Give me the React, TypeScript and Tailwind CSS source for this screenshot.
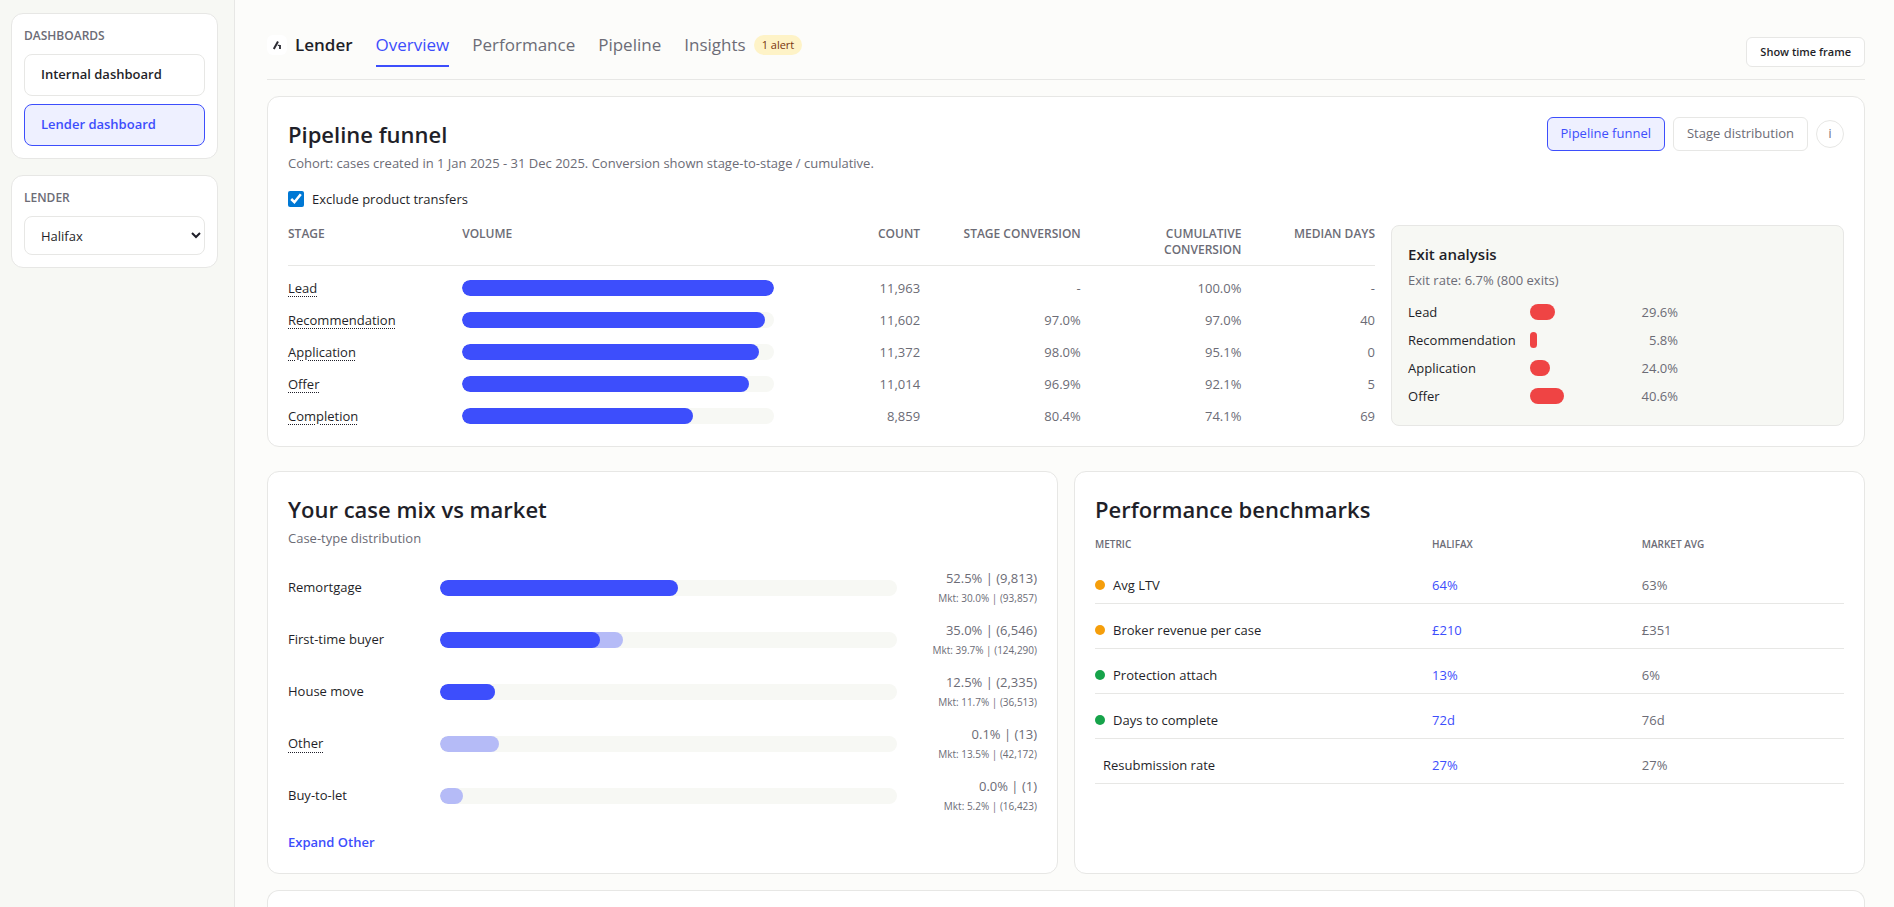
import React from "react";

type Stage = {
  name: string;
  fill: number;
  count: string;
  stageConversion: string;
  cumulative: string;
  medianDays: string;
};

const stages: Stage[] = [
  { name: "Lead", fill: 100, count: "11,963", stageConversion: "-", cumulative: "100.0%", medianDays: "-" },
  { name: "Recommendation", fill: 97, count: "11,602", stageConversion: "97.0%", cumulative: "97.0%", medianDays: "40" },
  { name: "Application", fill: 95, count: "11,372", stageConversion: "98.0%", cumulative: "95.1%", medianDays: "0" },
  { name: "Offer", fill: 92, count: "11,014", stageConversion: "96.9%", cumulative: "92.1%", medianDays: "5" },
  { name: "Completion", fill: 74, count: "8,859", stageConversion: "80.4%", cumulative: "74.1%", medianDays: "69" },
];

const exits = [
  { name: "Lead", fill: 30, share: "29.6%" },
  { name: "Recommendation", fill: 8, share: "5.8%" },
  { name: "Application", fill: 24, share: "24.0%" },
  { name: "Offer", fill: 41, share: "40.6%" },
];

const caseMix = [
  { name: "Remortgage", own: 52, market: 30, value: "52.5% | (9,813)", marketValue: "Mkt: 30.0% | (93,857)" },
  { name: "First-time buyer", own: 35, market: 40, value: "35.0% | (6,546)", marketValue: "Mkt: 39.7% | (124,290)" },
  { name: "House move", own: 12, market: 12, value: "12.5% | (2,335)", marketValue: "Mkt: 11.7% | (36,513)" },
  { name: "Other", own: 0, market: 13, value: "0.1% | (13)", marketValue: "Mkt: 13.5% | (42,172)", expandable: true },
  { name: "Buy-to-let", own: 0, market: 5, value: "0.0% | (1)", marketValue: "Mkt: 5.2% | (16,423)" },
];

const benchmarks = [
  { name: "Avg LTV", dot: "bg-[#f59e0b]", own: "64%", market: "63%" },
  { name: "Broker revenue per case", dot: "bg-[#f59e0b]", own: "£210", market: "£351" },
  { name: "Protection attach", dot: "bg-[#16a34a]", own: "13%", market: "6%" },
  { name: "Days to complete", dot: "bg-[#16a34a]", own: "72d", market: "76d" },
  { name: "Resubmission rate", dot: "", own: "27%", market: "27%" },
];

const funnelGrid = "grid grid-cols-[1.2fr_2.4fr_0.9fr_1.1fr_1.1fr_0.9fr] gap-x-3";
const card = "rounded-xl border border-[#e7e7e5] bg-white";

function Sidebar() {
  return (
    <aside className="flex w-[235px] shrink-0 flex-col gap-4 border-r border-[#e7e7e5] bg-[#f7f8f4] py-[13px] pr-4 pl-[11px]">
      <nav className={`${card} flex flex-col p-3`}>
        <h2 className="mb-2 text-[12px] leading-5 font-semibold text-[#6c6c76]">DASHBOARDS</h2>
        <div className="flex flex-col gap-2">
          <button type="button" className="h-[42px] rounded-lg border border-[#e7e7e5] bg-white px-4 text-left text-[13px] font-semibold">
            Internal dashboard
          </button>
          <button type="button" className="h-[42px] rounded-lg border border-[#3d4efc] bg-[#eef0ff] px-4 text-left text-[13px] font-semibold text-[#3d4efc]">
            Lender dashboard
          </button>
        </div>
      </nav>
      <div className={`${card} flex flex-col p-3`}>
        <label htmlFor="lender" className="mb-2 text-[12px] leading-5 font-semibold text-[#6c6c76]">
          LENDER
        </label>
        <select id="lender" defaultValue="Halifax" className="h-[39px] w-full rounded-lg border border-[#e7e7e5] bg-white pl-3 text-[13px]">
          <option>Halifax</option>
        </select>
      </div>
    </aside>
  );
}

function Header() {
  const tab = "border-b-2 pb-2 leading-[25px]";
  return (
    <header className="flex items-end justify-between border-b border-[#e7e7e5] pt-8 pb-3">
      <div className="flex items-start gap-[23px] text-[17px]">
        <div className="flex items-center gap-2 leading-[25px] font-semibold">
          <span className="flex size-5 items-center justify-center rounded-md bg-white">
            <svg viewBox="0 0 20 20" className="size-5" fill="none" stroke="#2b2b33" aria-hidden="true">
              <path d="M6.8 14 L11 6.6" strokeWidth="2" />
              <path d="M10.8 10.4 H12.6" strokeWidth="1.2" />
              <path d="M13 10 V14" strokeWidth="1.8" />
            </svg>
          </span>
          Lender
        </div>
        <nav className="flex items-start gap-[23px] text-[#6c6c76]">
          <a href="#overview" className={`${tab} border-[#3d4efc] text-[#3d4efc]`}>Overview</a>
          <a href="#performance" className={`${tab} border-transparent`}>Performance</a>
          <a href="#pipeline" className={`${tab} border-transparent`}>Pipeline</a>
          <a href="#insights" className={`${tab} flex items-center gap-2 border-transparent`}>
            Insights
            <span className="rounded-full bg-[#fef3c7] px-2 text-[11px] leading-5 text-[#78350f]">1 alert</span>
          </a>
        </nav>
      </div>
      <button type="button" className="h-[30px] rounded-md border border-[#e7e7e5] bg-white px-[13px] text-[11px] font-semibold">
        Show time frame
      </button>
    </header>
  );
}

function ExitAnalysis() {
  return (
    <div className="rounded-lg border border-[#e7e7e5] bg-[#f7f8f4] p-4">
      <h3 className="text-[15px] leading-6 font-semibold">Exit analysis</h3>
      <p className="mt-1 text-[13px] leading-5 text-[#6c6c76]">Exit rate: 6.7% (800 exits)</p>
      <ul className="mt-3 flex flex-col gap-2 text-[13px] leading-5">
        {exits.map((exit) => (
          <li key={exit.name} className="grid grid-cols-[110px_84px_52px] items-center gap-3">
            <span>{exit.name}</span>
            <span className="h-4 rounded-full bg-[#ef4444]" style={{ width: `${exit.fill}%` }} />
            <span className="text-right text-[#6c6c76]">{exit.share}</span>
          </li>
        ))}
      </ul>
    </div>
  );
}

function PipelineFunnel() {
  return (
    <section className={`${card} mt-4 p-5`}>
      <div className="flex items-start justify-between">
        <div>
          <h2 className="text-[22px] leading-[34px] font-semibold">Pipeline funnel</h2>
          <p className="mt-0.5 text-[13px] leading-5 text-[#6c6c76]">
            Cohort: cases created in 1 Jan 2025 - 31 Dec 2025. Conversion shown stage-to-stage / cumulative.
          </p>
        </div>
        <div className="flex items-center gap-2 text-[13px] text-[#6c6c76]">
          <button type="button" className="h-[34px] rounded-md border border-[#3d4efc] bg-[#eef0ff] px-[13px] text-[#3d4efc]">
            Pipeline funnel
          </button>
          <button type="button" className="h-[34px] rounded-md border border-[#e7e7e5] bg-white px-[13px]">
            Stage distribution
          </button>
          <button type="button" aria-label="About this chart" className="size-7 rounded-full border border-[#e7e7e5] bg-white text-[12px]">
            i
          </button>
        </div>
      </div>
      <label className="mt-4 flex w-fit items-center gap-2 text-[13px] leading-5">
        <input type="checkbox" defaultChecked className="size-4 accent-[#0078d4]" />
        Exclude product transfers
      </label>
      <div className="mt-4 grid grid-cols-[2.4fr_1fr] gap-4">
        <table className="block text-[13px] leading-5">
          <thead className="block">
            <tr className={`${funnelGrid} border-b border-[#e7e7e5] pt-px pb-[7px] text-right text-[12px] leading-4 text-[#6c6c76]`}>
              <th className="text-left font-semibold">STAGE</th>
              <th className="text-left font-semibold">VOLUME</th>
              <th className="font-semibold">COUNT</th>
              <th className="font-semibold">STAGE CONVERSION</th>
              <th className="font-semibold">CUMULATIVE<br />CONVERSION</th>
              <th className="font-semibold">MEDIAN DAYS</th>
            </tr>
          </thead>
          <tbody className="mt-3 flex flex-col gap-3">
            {stages.map((stage) => (
              <tr key={stage.name} className={`${funnelGrid} items-center text-right text-[#6c6c76]`}>
                <td className="text-left text-[#1f1f29]">
                  <a href={`#${stage.name}`} className="underline decoration-dotted decoration-1 underline-offset-3">{stage.name}</a>
                </td>
                <td className="pr-3">
                  <div className="h-4 overflow-hidden rounded-full bg-[#f7f8f4]">
                    <div className="h-full rounded-full bg-[#3d4efc]" style={{ width: `${stage.fill}%` }} />
                  </div>
                </td>
                <td>{stage.count}</td>
                <td>{stage.stageConversion}</td>
                <td>{stage.cumulative}</td>
                <td>{stage.medianDays}</td>
              </tr>
            ))}
          </tbody>
        </table>
        <ExitAnalysis />
      </div>
    </section>
  );
}

function CaseMix() {
  return (
    <section className={`${card} px-5 pt-5 pb-[21px]`}>
      <h2 className="text-[22px] leading-[34px] font-semibold">Your case mix vs market</h2>
      <p className="mt-0.5 text-[13px] leading-5 text-[#6c6c76]">Case-type distribution</p>
      <ul className="mt-5 flex flex-col gap-3 text-[13px]">
        {caseMix.map((row) => (
          <li key={row.name} className="grid grid-cols-[140px_1fr_128px] items-center gap-3">
            <span>
              {row.expandable ? (
                <a href="#other" className="underline decoration-dotted decoration-1 underline-offset-4">{row.name}</a>
              ) : (
                row.name
              )}
            </span>
            <span className="grid h-4 overflow-hidden rounded-full bg-[#f7f8f4]">
              <span className="col-start-1 row-start-1 rounded-full bg-[#b5bbf7]" style={{ width: `${row.market}%` }} />
              <span className="col-start-1 row-start-1 rounded-full bg-[#3d4efc]" style={{ width: `${row.own}%` }} />
            </span>
            <span className="flex flex-col text-right leading-5 text-[#6c6c76]">
              <span>{row.value}</span>
              <span className="text-[10px] leading-5">{row.marketValue}</span>
            </span>
          </li>
        ))}
      </ul>
      <button type="button" className="mt-4 block text-[13px] leading-5 font-semibold text-[#3d4efc]">
        Expand Other
      </button>
    </section>
  );
}

function Benchmarks() {
  return (
    <section className={`${card} p-5`}>
      <h2 className="text-[22px] leading-[34px] font-semibold">Performance benchmarks</h2>
      <table className="mt-2 w-full table-fixed border-collapse text-left text-[13px] leading-5">
        <colgroup>
          <col className="w-[45%]" />
          <col className="w-[28%]" />
          <col className="w-[27%]" />
        </colgroup>
        <thead className="text-[10px] leading-5 text-[#6c6c76]">
          <tr>
            <th className="pb-[5px] font-semibold">METRIC</th>
            <th className="pb-[5px] font-semibold">HALIFAX</th>
            <th className="pb-[5px] font-semibold">MARKET AVG</th>
          </tr>
        </thead>
        <tbody>
          {benchmarks.map((row) => (
            <tr key={row.name} className="border-b border-[#e7e7e5]">
              <td className="pt-4 pb-2">
                <span className="flex items-center gap-2">
                  <span className={row.dot ? `size-[10px] rounded-full ${row.dot}` : "w-0"} />
                  {row.name}
                </span>
              </td>
              <td className="pt-4 pb-2 text-[#3d4efc]">{row.own}</td>
              <td className="pt-4 pb-2 text-[#6c6c76]">{row.market}</td>
            </tr>
          ))}
        </tbody>
      </table>
    </section>
  );
}

export default function App() {
  return (
    <div className="flex min-h-screen bg-[#fcfcfa] font-['Open_Sans','Noto_Sans',sans-serif] text-[#1f1f29]">
      <Sidebar />
      <main className="flex min-w-0 flex-1 flex-col pr-[29px] pl-8">
        <Header />
        <PipelineFunnel />
        <div className="mt-6 grid grid-cols-2 gap-4">
          <CaseMix />
          <Benchmarks />
        </div>
        <section className="mt-4 min-h-4 flex-1 rounded-t-xl border border-b-0 border-[#e7e7e5] bg-white" />
      </main>
    </div>
  );
}
